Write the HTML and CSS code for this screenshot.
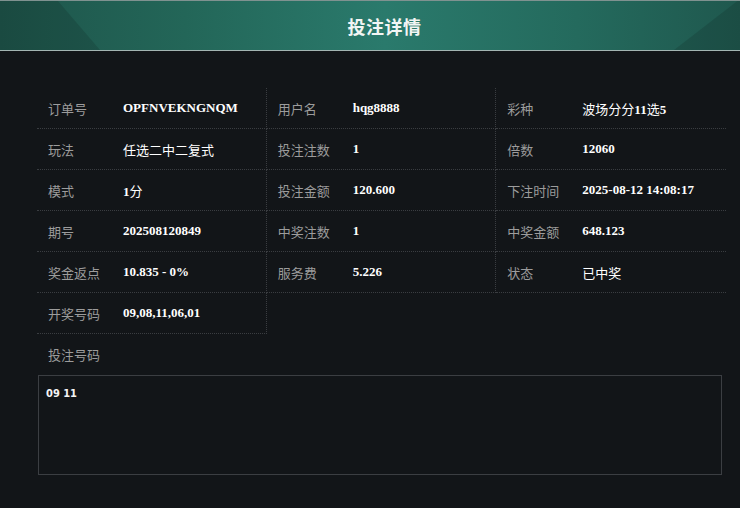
FILE: index.html
```html
<!DOCTYPE html>
<html lang="zh-CN">
<head>
<meta charset="UTF-8">
<meta name="viewport" content="width=device-width, initial-scale=1.0">
<title>投注详情</title>
<link rel="stylesheet" href="styles.css">
</head>
<body>

<div class="modal-header">
  <h2>投注详情</h2>
</div>

<div class="modal-body">
  <div class="detail-grid">
    <div class="cell"><span class="label">订单号</span><span class="value">OPFNVEKNGNQM</span></div>
    <div class="cell"><span class="label">用户名</span><span class="value">hqg8888</span></div>
    <div class="cell"><span class="label">彩种</span><span class="value"><span class="zh">波场分分</span>11<span class="zh">选</span>5</span></div>

    <div class="cell"><span class="label">玩法</span><span class="value"><span class="zh">任选二中二复式</span></span></div>
    <div class="cell"><span class="label">投注注数</span><span class="value">1</span></div>
    <div class="cell"><span class="label">倍数</span><span class="value">12060</span></div>

    <div class="cell"><span class="label">模式</span><span class="value">1<span class="zh">分</span></span></div>
    <div class="cell"><span class="label">投注金额</span><span class="value">120.600</span></div>
    <div class="cell"><span class="label">下注时间</span><span class="value">2025-08-12 14:08:17</span></div>

    <div class="cell"><span class="label">期号</span><span class="value">202508120849</span></div>
    <div class="cell"><span class="label">中奖注数</span><span class="value">1</span></div>
    <div class="cell"><span class="label">中奖金额</span><span class="value">648.123</span></div>

    <div class="cell"><span class="label">奖金返点</span><span class="value">10.835 - 0%</span></div>
    <div class="cell"><span class="label">服务费</span><span class="value">5.226</span></div>
    <div class="cell"><span class="label">状态</span><span class="value"><span class="zh">已中奖</span></span></div>

    <div class="cell"><span class="label">开奖号码</span><span class="value">09,08,11,06,01</span></div>
  </div>

  <div class="bet-title">投注号码</div>
  <div class="bet-box">09 11</div>
</div>

</body>
</html>
```

FILE: styles.css
```css
body {
  margin: 0;
  padding: 0;
  background-color: #121518;
  font-family: "Noto Sans CJK SC", sans-serif;
  height: 100vh;
  overflow: hidden;
}

.modal-header {
  position: relative;
  height: 49px;
  border-top: 1px solid #7f9290;
  border-bottom: 1px solid #a3b5b2;
  background: linear-gradient(90deg, #1e554b 0%, #236658 25%, #2a7a6c 52%, #246a5d 78%, #1f584e 100%);
  display: flex;
  align-items: center;
  justify-content: center;
  padding-left: 29px;
  overflow: hidden;
}

.modal-header::before,
.modal-header::after {
  content: "";
  position: absolute;
  top: 0;
  bottom: 0;
  background: rgba(0, 0, 0, 0.12);
}

.modal-header::before {
  left: 0;
  width: 100px;
  clip-path: polygon(0 0, 58% 0, 100% 100%, 0 100%);
}

.modal-header::after {
  right: 0;
  width: 66px;
  clip-path: polygon(96% 0, 100% 0, 100% 100%, 0 100%);
}

.modal-header h2 {
  margin: 0;
  font-size: 18px;
  font-weight: bold;
  color: #f2f5f4;
  letter-spacing: 0.5px;
}

.modal-body {
  padding: 37px 14px 0 37px;
}

.detail-grid {
  display: grid;
  grid-template-columns: repeat(3, 1fr);
}

.cell {
  display: flex;
  align-items: center;
  height: 40px;
  padding-left: 11px;
  border-bottom: 1px dotted #3a3d41;
  border-right: 1px dotted #3a3d41;
}

.cell:nth-child(3n) {
  border-right: none;
}

.label {
  width: 75px;
  flex-shrink: 0;
  font-size: 13px;
  color: #9c9c9c;
}

.value {
  font-family: "Liberation Serif", "Noto Sans CJK SC", serif;
  font-size: 13px;
  font-weight: bold;
  color: #ffffff;
}

.value .zh {
  font-family: "Noto Sans CJK SC", sans-serif;
  font-weight: normal;
}

.bet-title {
  height: 41px;
  display: flex;
  align-items: center;
  padding-left: 11px;
  font-size: 13px;
  color: #9c9c9c;
}

.bet-box {
  margin-left: 1px;
  width: 668px;
  height: 87px;
  padding: 6px 7px 5px;
  border: 1px solid #3b3e42;
  background-color: #121518;
  font-family: "DejaVu Sans Condensed", "DejaVu Sans", sans-serif;
  font-stretch: condensed;
  font-size: 11px;
  font-weight: bold;
  line-height: 24px;
  color: #f4f4f4;
}
```
